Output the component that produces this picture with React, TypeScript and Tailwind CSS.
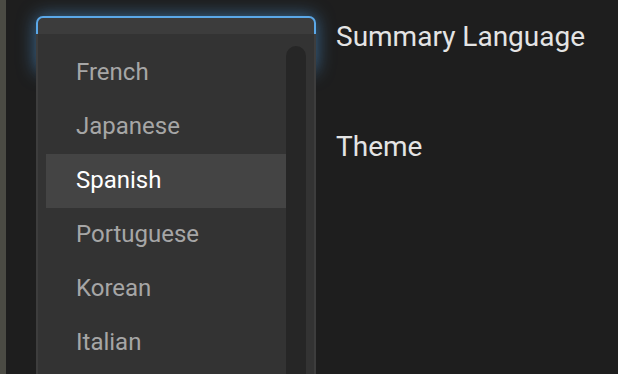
import { useState } from "react";

const languages = ["French", "Japanese", "Spanish", "Portuguese", "Korean", "Italian"];

export default function App() {
  const [selected, setSelected] = useState("Spanish");

  return (
    <div className="w-[618px] h-[374px] overflow-hidden flex bg-[#1e1e1e] font-['Roboto',sans-serif]">
      <div className="w-[6px] shrink-0 bg-[#4b4b44]" />
      <div className="pl-[30px] pt-4 shrink-0">
        <div className="w-[280px]">
          {/* select trigger with focus glow, mostly covered by the open menu */}
          <div className="h-[56px] -mb-[38px] rounded-[7px] border-2 border-[#5ba8e8] bg-[#3c3c3c] shadow-[0_0_18px_rgba(80,160,230,0.6)]" />
          <div className="relative z-10 flex h-[400px] border-x-2 border-[#3d3d3d] bg-[#333333] pt-[12px] pl-2">
            <ul className="flex-1">
              {languages.map((lang) => (
                <li
                  key={lang}
                  onClick={() => setSelected(lang)}
                  className={
                    lang === selected
                      ? "h-[54px] flex items-center pl-[30px] pb-[2px] text-[24px] text-white bg-[#444444] cursor-pointer"
                      : "h-[54px] flex items-center pl-[30px] pb-[2px] text-[24px] text-[#a6a6a6] cursor-pointer"
                  }
                >
                  {lang}
                </li>
              ))}
            </ul>
            <div className="w-5 rounded-t-[10px] bg-[#262626] mr-2" />
          </div>
        </div>
      </div>
      <div className="pl-5 flex flex-col text-[28px] text-[#e4e4e4]">
        <div className="h-[74px] flex items-center">Summary Language</div>
        <div className="h-[74px] flex items-center mt-[36px]">Theme</div>
      </div>
    </div>
  );
}
